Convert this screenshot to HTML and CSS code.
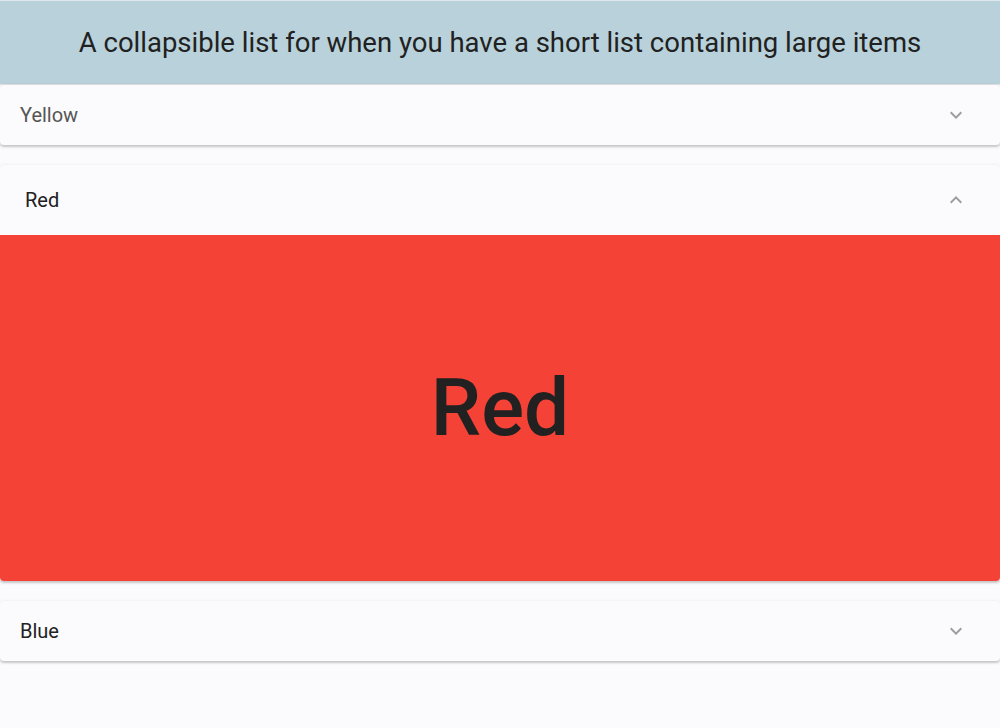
FILE: index.html
```html
<!DOCTYPE html>
<html lang="en">
  <head>
    <meta charset="UTF-8" />
    <title>Collapsible list</title>
    <link rel="stylesheet" href="styles.css">
  </head>
  <body>
    <header class="title-bar">
      <h1>A collapsible list for when you have a short list containing large items</h1>
    </header>

    <div class="panel">
      <div class="panel-head">
        <span class="panel-name muted">Yellow</span>
        <svg class="chev" width="24" height="24" viewBox="0 0 24 24"><path d="M7.41 8.59L12 13.17l4.59-4.58L18 10l-6 6-6-6z" fill="#9e9e9e"/></svg>
      </div>
    </div>

    <div class="panel open">
      <div class="panel-head tall">
        <span class="panel-name inset">Red</span>
        <svg class="chev" width="24" height="24" viewBox="0 0 24 24"><path d="M7.41 15.41L12 10.83l4.59 4.58L18 14l-6-6-6 6z" fill="#9e9e9e"/></svg>
      </div>
      <div class="panel-body red">Red</div>
    </div>

    <div class="panel">
      <div class="panel-head">
        <span class="panel-name">Blue</span>
        <svg class="chev" width="24" height="24" viewBox="0 0 24 24"><path d="M7.41 8.59L12 13.17l4.59-4.58L18 10l-6 6-6-6z" fill="#9e9e9e"/></svg>
      </div>
    </div>
  </body>
</html>
```

FILE: styles.css
```css
body {
  margin: 0;
  font-family: Roboto, "Liberation Sans", sans-serif;
  background-color: #fbfbfd;
  color: #212121;
}
.title-bar {
  background-color: #b8d1da;
  height: 84px;
  border-top: 1px solid #dfe9ed;
  box-sizing: border-box;
  display: flex;
  align-items: center;
  justify-content: center;
  box-shadow: 0 1px 2px rgba(0, 0, 0, 0.15);
}
.title-bar h1 {
  margin: 0;
  font-size: 27.5px;
  font-weight: 400;
  color: #212121;
}
.panel {
  background-color: #fbfbfd;
  border-radius: 4px;
  box-shadow: 0 2px 2px rgba(0, 0, 0, 0.14), 0 1px 4px rgba(0, 0, 0, 0.12);
  margin-top: 1px;
  margin-bottom: 20px;
  overflow: hidden;
}
.panel.open {
  margin-top: 0;
}
.panel-head {
  height: 60px;
  display: flex;
  align-items: center;
  justify-content: space-between;
  padding: 0 32px 0 20px;
}
.panel-head.tall {
  height: 70px;
}
.panel-name {
  font-size: 20px;
}
.muted {
  color: #555;
}
.inset {
  padding-left: 5px;
}
.panel-body {
  height: 346px;
  display: flex;
  align-items: center;
  justify-content: center;
  font-size: 80px;
  font-weight: 500;
}
.red {
  background-color: #f44336;
  color: #212121;
}
```
